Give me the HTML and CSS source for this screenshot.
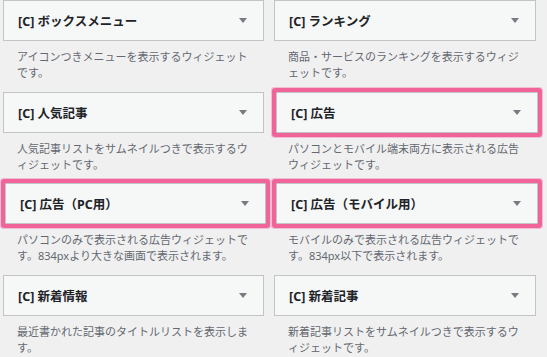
FILE: index.html
```html
<!DOCTYPE html>
<html lang="ja">
<head>
    <meta charset="UTF-8">
    <meta name="viewport" content="width=device-width, initial-scale=1.0">
    <title>ウィジェット</title>
    <link rel="stylesheet" href="styles.css">
</head>
<body>
    <div class="widget-list">
        <div class="widget">
            <div class="widget-top"><span class="widget-title">[C] ボックスメニュー</span><span class="arrow"></span></div>
            <p class="widget-desc">アイコンつきメニューを表示するウィジェット<br>です。</p>
        </div>
        <div class="widget">
            <div class="widget-top"><span class="widget-title">[C] ランキング</span><span class="arrow"></span></div>
            <p class="widget-desc">商品・サービスのランキングを表示するウィジ<br>ェットです。</p>
        </div>
        <div class="widget">
            <div class="widget-top"><span class="widget-title">[C] 人気記事</span><span class="arrow"></span></div>
            <p class="widget-desc">人気記事リストをサムネイルつきで表示するウ<br>ィジェットです。</p>
        </div>
        <div class="widget highlight">
            <div class="widget-top"><span class="widget-title">[C] 広告</span><span class="arrow"></span></div>
            <p class="widget-desc">パソコンとモバイル端末両方に表示される広告<br>ウィジェットです。</p>
        </div>
        <div class="widget highlight">
            <div class="widget-top"><span class="widget-title">[C] 広告（PC用）</span><span class="arrow"></span></div>
            <p class="widget-desc">パソコンのみで表示される広告ウィジェットで<br>す。834pxより大きな画面で表示されます。</p>
        </div>
        <div class="widget highlight">
            <div class="widget-top"><span class="widget-title">[C] 広告（モバイル用）</span><span class="arrow"></span></div>
            <p class="widget-desc">モバイルのみで表示される広告ウィジェットで<br>す。834px以下で表示されます。</p>
        </div>
        <div class="widget">
            <div class="widget-top"><span class="widget-title">[C] 新着情報</span><span class="arrow"></span></div>
            <p class="widget-desc">最近書かれた記事のタイトルリストを表示しま<br>す。</p>
        </div>
        <div class="widget">
            <div class="widget-top"><span class="widget-title">[C] 新着記事</span><span class="arrow"></span></div>
            <p class="widget-desc">新着記事リストをサムネイルつきで表示するウ<br>ィジェットです。</p>
        </div>
    </div>
</body>
</html>
```

FILE: styles.css
```css
* {
    margin: 0;
    padding: 0;
    box-sizing: border-box;
}

body {
    font-family: "Noto Sans", "Noto Sans CJK JP", sans-serif;
    background-color: #f0f0f1;
    color: #1d2327;
    overflow: hidden;
}

.widget-list {
    display: grid;
    grid-template-columns: 261px 262px;
    column-gap: 10px;
    padding-left: 3px;
}

.widget-top {
    display: flex;
    align-items: center;
    height: 41px;
    padding: 0 16px 0 14px;
    background-color: #f6f7f7;
    border: 1px solid #c3c4c7;
}

.widget-title {
    font-size: 12.5px;
    font-weight: bold;
    color: #1d2327;
}

.arrow {
    margin-left: auto;
    width: 0;
    height: 0;
    border-left: 4px solid transparent;
    border-right: 4px solid transparent;
    border-top: 5px solid #787c82;
}

.widget-desc {
    padding: 8px 0 10.5px 14px;
    font-size: 11px;
    line-height: 16px;
    color: #646970;
    white-space: nowrap;
}

.highlight .widget-top {
    margin: 0 -2px 0 2px;
    border-radius: 1px;
    box-shadow: 0 0 0 4px #f0649a, 0 0 0 5px rgba(240, 100, 154, 0.35);
}
```
